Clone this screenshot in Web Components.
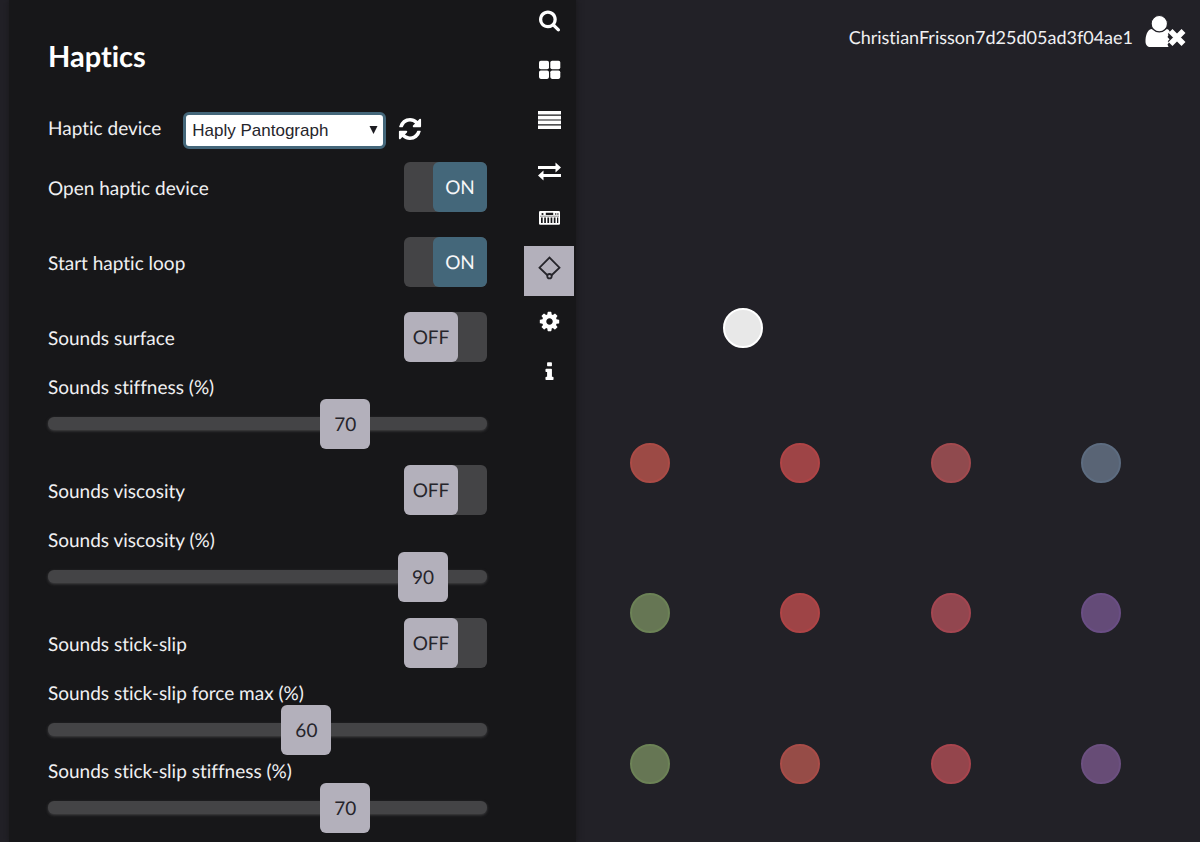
<!DOCTYPE html>
<html lang="en">
<head>
<meta charset="utf-8">
<title>Haptics</title>
<style>
  html, body { margin: 0; min-height: 100%; background: #222127; }
  body { font-family: Lato, "Open Sans", sans-serif; font-size: 19px; line-height: 24px; color: #f0f0f2;
    font-variant-ligatures: none; text-rendering: geometricPrecision; }
</style>
</head>
<body>
<haptic-app>
  <side-rail slot="rail"></side-rail>
  <settings-panel slot="panel" heading="Haptics">
    <device-picker></device-picker>
    <toggle-row label="Open haptic device" on></toggle-row>
    <toggle-row label="Start haptic loop" on></toggle-row>
    <toggle-row label="Sounds surface"></toggle-row>
    <slider-row label="Sounds stiffness (%)" value="70"></slider-row>
    <toggle-row label="Sounds viscosity"></toggle-row>
    <slider-row label="Sounds viscosity (%)" value="90"></slider-row>
    <toggle-row label="Sounds stick-slip"></toggle-row>
    <slider-row label="Sounds stick-slip force max (%)" value="60"></slider-row>
    <slider-row label="Sounds stick-slip stiffness (%)" value="70"></slider-row>
  </settings-panel>
  <user-badge slot="stage" name="ChristianFrisson7d25d05ad3f04ae1"></user-badge>
  <sound-map slot="stage"></sound-map>
</haptic-app>

<script>
const define = (name, render, after) => customElements.define(name, class extends HTMLElement {
  connectedCallback() {
    if (this.shadowRoot) return;
    const root = this.attachShadow({ mode: "open" });
    root.innerHTML = render(this);
    if (after) after(root, this);
  }
});

define("haptic-app", () => `
  <style>
    :host { display: grid; grid-template-columns: 48% 1fr; min-height: 100vh; }
    aside { display: flex; margin-left: 9px; padding-right: 2px; background: #171719; box-shadow: 0 0 6px #171719; }
    .panel { flex: 1; min-width: 0; }
    main { position: relative; }
  </style>
  <aside><div class="panel"><slot name="panel"></slot></div><slot name="rail"></slot></aside>
  <main><slot name="stage"></slot></main>`);

define("settings-panel", el => `
  <style>
    :host { display: block; padding: 39px 37px 0 39px; }
    h1 { margin: 0 0 35px; font-size: 29px; line-height: 36px; font-weight: 700; color: #fff; }
  </style>
  <h1>${el.getAttribute("heading")}</h1>
  <slot></slot>`);

define("device-picker", () => `
  <style>
    :host { display: flex; align-items: flex-end; height: 39px; }
    label { flex: none; margin: 0 22px 8px 0; }
    .box { position: relative; flex: none; }
    select { appearance: none; display: block; box-sizing: border-box; width: 203px; height: 37px; margin: 0; padding: 0 24px 0 6px;
      border: 3px solid #44677a; border-radius: 6px; background: #fff; color: #26252b; outline: 0;
      font: 17px/24px "Liberation Sans", Arial, sans-serif; }
    .box svg { position: absolute; right: 8px; top: 14px; pointer-events: none; }
    button { display: flex; margin: 0 0 8px 12px; padding: 0; border: 0; background: none; color: #fff; }
  </style>
  <label for="device">Haptic device</label>
  <div class="box">
    <select id="device"><option>Haply Pantograph</option></select>
    <svg width="9" height="9" viewBox="0 0 9 9" aria-hidden="true"><path d="M.5 0h8L4.5 8z" fill="#1d1c22"/></svg>
  </div>
  <button aria-label="Refresh devices"><svg width="24" height="24" viewBox="64 64 1664 1664" fill="currentColor"><path d="M1639 1056q0 5-1 7-64 268-268 434.500t-478 166.500q-146 0-282.500-55t-243.500-157l-129 129q-19 19-45 19t-45-19-19-45v-448q0-26 19-45t45-19h448q26 0 45 19t19 45-19 45l-137 137q71 66 161 102t187 36q134 0 250-65t186-179q11-17 53-117 8-23 30-23h192q13 0 22.500 9.500t9.500 22.500zm25-800v448q0 26-19 45t-45 19h-448q-26 0-45-19t-19-45 19-45l138-138q-148-137-349-137-134 0-250 65t-186 179q-11 17-53 117-8 23-30 23h-199q-13 0-22.500-9.500t-9.500-22.500v-7q65-268 270-434.500t480-166.500q146 0 284 55.500t245 156.500l130-129q19-19 45-19t45 19 19 45z"/></svg></button>`);

define("toggle-row", el => `
  <style>
    :host { display: block; padding: 13px 0 12px; }
    label { display: flex; justify-content: space-between; align-items: center; }
    .text { padding-top: 3px; }
    .switch { position: relative; flex: none; display: flex; width: 83px; height: 50px; border-radius: 6px; background: #444446; }
    input { appearance: none; position: absolute; inset: 0; margin: 0; }
    .knob { box-sizing: border-box; width: 54px; height: 50px; line-height: 52px; text-align: center; border-radius: 6px; background: #b3b0bb; color: #26252b; pointer-events: none; }
    input:checked + .knob { margin-left: auto; background: #44677a; color: #f6f6f8; }
  </style>
  <label><span class="text">${el.getAttribute("label")}</span>
    <span class="switch"><input type="checkbox" role="switch" ${el.hasAttribute("on") ? "checked" : ""}><span class="knob"></span></span>
  </label>`,
  root => {
    const input = root.querySelector("input"), knob = root.querySelector(".knob");
    const sync = () => { knob.textContent = input.checked ? "ON" : "OFF"; };
    input.addEventListener("change", sync);
    sync();
  });

define("slider-row", el => `
  <style>
    :host { display: block; padding-bottom: 4px; }
    label { display: block; padding-top: 4px; line-height: 20px; }
    .slider { position: relative; height: 50px; }
    input { appearance: none; display: block; width: 100%; height: 50px; margin: 0; background: none; }
    input::-webkit-slider-runnable-track { height: 13px; border-radius: 6px; background: #444446; box-shadow: 0 1px 3px #444446; }
    input::-webkit-slider-thumb { appearance: none; width: 50px; height: 50px; margin-top: -18px; border-radius: 6px; background: #b3b0bb; }
    output { position: absolute; top: 0; left: calc((100% - 50px) * var(--value) / 100); width: 50px; height: 50px; line-height: 53px;
      text-align: center; color: #26252b; pointer-events: none; }
  </style>
  <label for="range">${el.getAttribute("label")}</label>
  <div class="slider"><input id="range" type="range" min="0" max="100" value="${el.getAttribute("value")}"><output for="range"></output></div>`,
  root => {
    const input = root.querySelector("input"), out = root.querySelector("output");
    const sync = () => { out.textContent = input.value; out.style.setProperty("--value", input.value); };
    input.addEventListener("input", sync);
    sync();
  });

const railIcons = [
  ["Search", `<g transform="translate(15 12.900) scale(.01262)"><path d="M1152 832q0-185-131.500-316.500t-316.500-131.500-316.500 131.500-131.500 316.500 131.500 316.500 316.500 131.500 316.500-131.500 131.500-316.500zm512 832q0 52-38 90t-90 38q-54 0-90-38l-343-342q-179 124-399 124-143 0-273.500-55.500t-225-150-150-225-55.500-273.500 55.500-273.500 150-225 225-150 273.500-55.500 273.500 55.500 225 150 150 225 55.500 273.500q0 220-124 399l343 343q37 37 37 90z"/></g>`],
  ["Grid", `<rect x="15" y="14.700" width="10" height="8.500" rx="1.800"/><rect x="26.300" y="14.700" width="10" height="8.500" rx="1.800"/><rect x="15" y="24.400" width="10" height="8.500" rx="1.800"/><rect x="26.300" y="24.400" width="10" height="8.500" rx="1.800"/>`],
  ["List", `<path d="M14 15h23v3.600h-23zM14 19.800h23v3.600h-23zM14 24.600h23v3.600h-23zM14 29.400h23v3.600h-23z"/>`],
  ["Exchange", `<path d="M14 20h17.500v-3.500l5.500 5-5.500 5v-3.500h-17.500zM37 28h-17.500v-3.500l-5.500 5 5.500 5v-3.500h17.500z"/>`],
  ["Keyboard", `<rect x="15" y="15" width="21" height="13.700" rx="1.300"/><g fill="#171719"><path d="M21.800 16.700h7.400v2.300h-7.400zM17 21.500h1.700v5.500h-1.700zM20.200 21.500h1.700v5.500h-1.700zM23.400 21.500h1.700v5.500h-1.700zM26.600 21.500h1.700v5.500h-1.700zM29.800 21.500h1.700v5.500h-1.700zM33 21.500h1.300v5.500h-1.300z"/><circle cx="18.500" cy="18" r="1.100"/><circle cx="31.700" cy="18" r=".8"/><circle cx="33.900" cy="18" r=".8"/></g><path d="M16 20.200h19" stroke="#171719" stroke-width=".5"/>`],
  ["Haptics", `<g fill="none" stroke="#26252b" stroke-width="1.800"><path d="M23.700 29.500l-8.200-7.800 10-10.200 10 10.200-8.200 7.800"/><circle cx="25.500" cy="30.200" r="2.200"/></g>`],
  ["Settings", `<g transform="translate(14.200 14.200) scale(.01262)"><path d="M1152 896q0-106-75-181t-181-75-181 75-75 181 75 181 181 75 181-75 75-181zm512-109v222q0 12-8 23t-20 13l-185 28q-19 54-39 91 35 50 107 138 10 12 10 25t-9 23q-27 37-99 108t-94 71q-12 0-26-9l-138-108q-44 23-91 38-16 136-29 186-7 28-36 28h-222q-14 0-24.500-8.500t-11.500-21.500l-28-184q-49-16-90-37l-141 107q-10 9-25 9-14 0-25-11-126-114-165-168-7-10-7-23 0-12 8-23 15-21 51-66.500t54-70.500q-27-50-41-99l-183-27q-13-2-21-12.500t-8-23.500v-222q0-12 8-23t19-13l186-28q14-46 39-92-40-57-107-138-10-12-10-24 0-10 9-23 26-36 98.500-107.500t94.500-71.500q13 0 26 10l138 107q44-23 91-38 16-136 29-186 7-28 36-28h222q14 0 24.500 8.500t11.500 21.500l28 184q49 16 90 37l142-107q9-9 24-9 13 0 25 10 129 119 165 170 7 8 7 22 0 12-8 23-15 21-51 66.500t-54 70.500q26 50 41 98l183 28q13 2 21 12.500t8 23.500z"/></g>`],
  ["Information", `<g transform="translate(14.200 14.700) scale(.01262)"><path d="M1216 1344v128q0 26-19 45t-45 19h-512q-26 0-45-19t-19-45v-128q0-26 19-45t45-19h64v-384h-64q-26 0-45-19t-19-45v-128q0-26 19-45t45-19h384q26 0 45 19t19 45v576h64q26 0 45 19t19 45zm-128-1152v192q0 26-19 45t-45 19h-256q-26 0-45-19t-19-45v-192q0-26 19-45t45-19h256q26 0 45 19t19 45z"/></g>`]
];

define("side-rail", () => `
  <style>
    :host { display: block; flex: none; width: 50px; margin-top: -4px; }
    button { display: block; width: 50px; height: 50px; padding: 0; border: 0; background: none; color: #fff; }
    button[aria-current] { background: #b3b0bb; }
    svg { display: block; fill: currentColor; }
  </style>
  ${railIcons.map(([name, art]) => `<button aria-label="${name}" ${name === "Haptics" ? 'aria-current="page"' : ""}><svg width="50" height="50" viewBox="0 0 50 50">${art}</svg></button>`).join("")}`);

define("user-badge", el => `
  <style>
    :host { display: flex; justify-content: flex-end; align-items: center; gap: 12px; padding: 14px 14px 0 0; font-size: 18px; }
    span { padding-top: 10px; }
    button { display: block; padding: 0; border: 0; background: none; }
    svg { display: block; }
  </style>
  <span>${el.getAttribute("name")}</span>
  <button aria-label="Log out"><svg width="41" height="36" viewBox="0 0 41 36" fill="#fff">
    <path d="M6.500 15C2 16 .5 22 .5 27.500 .5 31 2.500 33 5.500 33H23.500L22.500 30.500 25.500 26.500 22.500 23 25 18Q23.500 15 22 15 15 20 6.500 15Z"/>
    <circle cx="14.300" cy="9.700" r="8.200" stroke="#222127" stroke-width="1.200"/>
    <path d="M25.500 17.300l12.600 12.600M38.100 17.300l-12.600 12.600" stroke="#222127" stroke-width="7.800"/>
    <path d="M25.500 17l13 13M38.500 17l-13 13" stroke="#fff" stroke-width="5.600"/>
  </svg></button>`);

/* Each sound: centre x, centre y, fill, ring. */
const sounds = [
  [74, 463, "#9c4a45", "#ab4b46"], [224, 463, "#9e4446", "#af4446"], [375, 463, "#904a4e", "#a24a4f"], [525, 463, "#596475", "#5d6c80"],
  [74, 613, "#667654", "#6c8256"], [224, 613, "#9e4446", "#af4446"], [375, 613, "#92464f", "#a44651"], [525, 613, "#644b78", "#6a4e84"],
  [74, 764, "#667654", "#6c8256"], [224, 764, "#964c47", "#a84c48"], [375, 764, "#94454c", "#a8454e"], [525, 764, "#674c76", "#6c5080"],
  [167, 328, "#e8e8e8", "#ffffff"]
];

define("sound-map", () => `
  <style>
    :host { position: absolute; inset: 0; pointer-events: none; }
    i { position: absolute; box-sizing: border-box; width: 40px; height: 40px; margin: -20px 0 0 -20px; border: 2px solid; border-radius: 50%; }
  </style>
  ${sounds.map(([x, y, fill, ring]) => `<i style="left:${x}px;top:${y}px;background:${fill};border-color:${ring}"></i>`).join("")}`);
</script>
</body>
</html>
